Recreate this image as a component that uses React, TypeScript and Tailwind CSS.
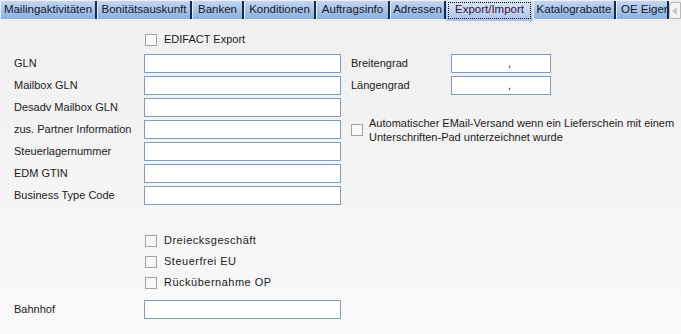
import clsx from 'clsx'

const tabs = [
  { label: 'Mailingaktivitäten', w: 'w-[97px]' },
  { label: 'Bonitätsauskunft', w: 'w-[95px]' },
  { label: 'Banken', w: 'w-[52px]' },
  { label: 'Konditionen', w: 'w-[72px]' },
  { label: 'Auftragsinfo', w: 'w-[74px]' },
  { label: 'Adressen', w: 'w-[56px]' },
  { label: 'Export/Import', w: 'w-[87px]', active: true },
  { label: 'Katalograbatte', w: 'w-[83px]' },
  { label: 'OE Eigen', w: 'w-[53px]', cut: true },
]

const leftFields = [
  'GLN',
  'Mailbox GLN',
  'Desadv Mailbox GLN',
  'zus. Partner Information',
  'Steuerlagernummer',
  'EDM GTIN',
  'Business Type Code',
]

const CheckBox = () => (
  <div className="w-[12px] h-[12px] shrink-0 border border-[#a3a3a3] bg-[#f8f8f8]" />
)

const CheckRow = ({ label, wide }: { label: string; wide?: boolean }) => (
  <div className="flex items-center h-[13px] pl-[131px]">
    <CheckBox />
    <span className={clsx('ml-[7px] leading-none', wide && 'tracking-[0.5px]')}>{label}</span>
  </div>
)

const TextInput = ({ className }: { className?: string }) => (
  <div className={clsx('h-[19px] border border-[#7f9db9] bg-white', className)} />
)

const App = () => {
  return (
    <div
      className="w-[681px] h-[334px] overflow-hidden flex flex-col text-[11px] text-[#1a1a1a]"
      style={{ fontFamily: '"Liberation Sans", Arial, sans-serif' }}
    >
      {/* tab strip */}
      <div className="h-[21px] shrink-0 flex items-end bg-[#f0f0f0] border-b border-[#e4ebf4]">
        {tabs.map((t) => (
          <div
            key={t.label}
            className={clsx(
              'shrink-0 flex items-center text-[11.5px] overflow-hidden whitespace-nowrap',
              t.w,
              t.active
                ? 'h-[21px] self-start bg-gradient-to-b from-[#dce8f7] to-[#a8c3e8] text-[#3d0f3a] p-[2px]'
                : 'h-[18px] mb-[1px] bg-gradient-to-b from-[#c3d7f0] to-[#8db0de] text-[#111a2e] border-r-2 border-[#16284f] border-l border-l-[#e6eef9]',
              t.cut ? 'justify-start pl-[4px] border-r-0' : 'justify-center'
            )}
          >
            {t.active ? (
              <div className="w-full h-full flex items-center justify-center border border-dotted border-black pb-[2px]">
                {t.label}
              </div>
            ) : (
              t.label
            )}
          </div>
        ))}
        <div className="w-[12px] h-[17px] mb-[1px] shrink-0 bg-[#f4f4f4] border border-[#b8b8b8] rounded-l-[3px] flex items-center justify-center">
          <svg width="6" height="8" viewBox="0 0 6 8">
            <path d="M5 0 L0 4 L5 8 Z" fill="#c9c9c9" />
          </svg>
        </div>
      </div>

      {/* content */}
      <div className="flex-1 bg-gradient-to-b from-[#f0f0f0] to-[#f9f9f9] pl-[14px] pt-[12px]">
        <CheckRow label="EDIFACT Export" />

        <div className="flex mt-[8px]">
          {/* left column */}
          <div className="w-[327px] flex flex-col gap-[3px]">
            {leftFields.map((f) => (
              <div key={f} className="flex items-center h-[19px]">
                <span className="w-[130px] shrink-0">{f}</span>
                <TextInput className="flex-1" />
              </div>
            ))}
          </div>

          {/* right column */}
          <div className="ml-[10px] flex flex-col">
            <div className="flex flex-col gap-[3px]">
              {['Breitengrad', 'Längengrad'].map((f) => (
                <div key={f} className="flex items-center h-[19px]">
                  <span className="w-[100px] shrink-0">{f}</span>
                  <div className="w-[100px] h-[19px] border border-[#7f9db9] bg-white flex justify-center pl-[17px] pt-[3px] leading-none">
                    ,
                  </div>
                </div>
              ))}
            </div>
            <div className="flex items-center mt-[21px]">
              <CheckBox />
              <span className="ml-[6px] leading-[14px] whitespace-nowrap">
                Automatischer EMail-Versand wenn ein Lieferschein mit einem
                <br />
                Unterschriften-Pad unterzeichnet wurde
              </span>
            </div>
          </div>
        </div>

        <div className="flex flex-col gap-[8px] mt-[29px]">
          <CheckRow label="Dreiecksgeschäft" wide />
          <CheckRow label="Steuerfrei EU" wide />
          <CheckRow label="Rückübernahme OP" wide />
        </div>

        <div className="flex items-center h-[19px] mt-[11px] w-[327px]">
          <span className="w-[130px] shrink-0">Bahnhof</span>
          <TextInput className="flex-1" />
        </div>
      </div>
    </div>
  )
}

export default App
